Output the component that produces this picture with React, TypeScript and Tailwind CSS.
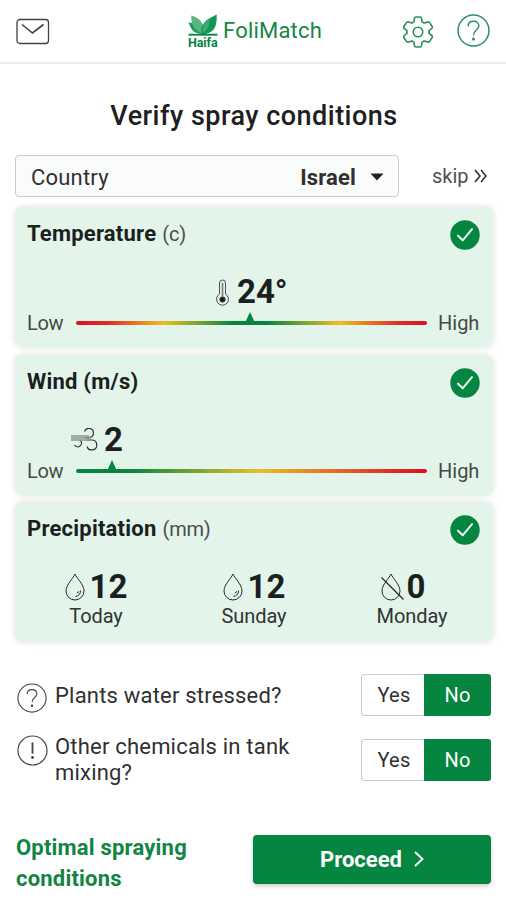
import type { ReactNode } from "react";

function CheckBadge() {
  return (
    <svg className="h-[30px] w-[30px] shrink-0" viewBox="0 0 30 30" fill="none">
      <circle cx="15" cy="15" r="14.7" fill="#048540" />
      <path d="M8 15.7 12.7 20.3 22 9.2" stroke="#e6f5ec" strokeWidth="2.1" strokeLinecap="round" strokeLinejoin="round" />
    </svg>
  );
}

function Card({ title, unit, children }: { title: string; unit?: string; children: ReactNode }) {
  return (
    <section className="h-[140px] rounded-[8px] bg-[#e3f4ea] pl-[12px] pr-[13px] pt-[13px] shadow-[0_0_6px_rgba(0,0,0,0.14)]">
      <div className="flex h-[30px] justify-between">
        <h2 className="text-[22px] font-bold leading-[28px] tracking-[0.22px] text-[#1b1f1d]">
          {title}
          {unit && <span className="ml-1.5 text-[20px] font-normal tracking-[-0.2px] text-[#4a4f4c]">{unit}</span>}
        </h2>
        <CheckBadge />
      </div>
      {children}
    </section>
  );
}

function Scale({ track, marker }: { track: string; marker: string }) {
  return (
    <div className="flex h-6 items-center text-[20px] leading-6 text-[#454a47]">
      <span className="w-[49px] tracking-[-0.3px]">Low</span>
      <div className={"relative h-1 w-[351px] rounded-full " + track}>
        <svg className={"absolute -top-[9px] h-[11px] w-[10px] " + marker} viewBox="0 0 10 11">
          <path d="M5 0 10 11H0Z" fill="#048540" />
        </svg>
      </div>
      <span className="ml-[11px]">High</span>
    </div>
  );
}

function Drop({ crossed }: { crossed?: boolean }) {
  return (
    <svg className={crossed ? "h-7 w-6" : "h-7 w-5"} viewBox={crossed ? "0 0 24 28" : "0 0 20 28"} fill="none" stroke="#252b28" strokeWidth="1">
      <path d="M10 1C8.500 5 1 11.500 1 18a9 9 0 0 0 18 0C19 11.500 11.500 5 10 1Z" />
      {crossed ? <path d="m.5 4.500 22 22" strokeWidth="1.2" /> : <path d="M15.500 17.500a6 6 0 0 1-5 6M12 20l2-1.500" />}
    </svg>
  );
}

function Day({ value, label, crossed, className }: { value: string; label: string; crossed?: boolean; className: string }) {
  return (
    <div className={"flex flex-col items-center " + className}>
      <div className={"flex h-[34px] items-center text-[33px] font-bold leading-[34px] text-[#1b1f1d] " + (crossed ? "gap-[2px] pr-[18px]" : "gap-[5px]")}>
        <Drop crossed={crossed} />
        <span>{value}</span>
      </div>
      <div className="text-[20px] leading-6 tracking-[-0.1px] text-[#303532]">{label}</div>
    </div>
  );
}

function Toggle() {
  return (
    <div className="flex h-[42px] w-[130px] overflow-hidden rounded-[3px] text-[20px] leading-[42px] tracking-[0.2px]">
      <button className="w-[63px] rounded-l-[3px] border border-r-0 border-[#c8cbc9] pl-[2px] leading-[41px] text-[#303030]">Yes</button>
      <button className="w-[67px] bg-[#048540] text-white">No</button>
    </div>
  );
}

function CircleMark({ kind, className, width }: { kind: "question" | "alert"; className: string; width: string }) {
  return (
    <svg className={className} viewBox="0 0 32 32" fill="none" stroke="currentColor" strokeWidth={width} strokeLinecap="round">
      <circle cx="16" cy="16" r="15" />
      {kind === "question" ? (
        <>
          <path d="M10.800 11.500C11 8.500 13 7 16 7s5.200 1.800 5.200 4.500c0 4-5 4-5 8.500" />
          <circle cx="16" cy="24.300" r=".8" fill="currentColor" />
        </>
      ) : (
        <>
          <path d="M16 8.500v10" strokeWidth="1.900" />
          <circle cx="16" cy="23.300" r=".9" fill="currentColor" />
        </>
      )}
    </svg>
  );
}

export default function App() {
  return (
    <main className="flex h-[900px] w-[506px] flex-col overflow-hidden whitespace-nowrap bg-white font-[Roboto,sans-serif]">
      <header className="flex h-[64px] shrink-0 items-start border-b-2 border-[#ececec]">
        <svg className="ml-4 mt-[18px] h-[27px] w-[34px]" viewBox="0 0 34 27" fill="none" stroke="#414141" strokeWidth="1.300">
          <rect x="1" y="1.500" width="31.500" height="24" rx="3" />
          <path d="m6 6.500 10.500 8.500L27.500 6.500" strokeWidth="1.600" />
        </svg>
        <div className="ml-[138px] mt-[14px] w-[30px]">
          <svg className="block h-[22px] w-[30px]" viewBox="0 0 30 22">
            <path d="M15 20C5 20 3 15 .5 8.500c4 .2 6.500 1.500 8.500 4Z" fill="#1f9a57" />
            <path d="M15 20C6 16.500 3 10 3.200 1.500 11 3.500 16.500 9 16 18Z" fill="#5bb583" />
            <path d="M13.500 20C12 8.500 20 5 28.700.5 29 12 27 20 13.500 20Z" fill="#139653" />
            <path d="M14.500 19.500C13.500 12 17 8 21 5.500c1.500 5-1.500 10.500-6.500 14Z" fill="#3eaa70" />
            <path d="M.5 20.700h29" stroke="#048540" strokeWidth="1.900" />
          </svg>
          <div className="text-[12.5px] font-bold leading-[13px] tracking-[-0.1px] text-[#048540]">Haifa</div>
        </div>
        <span className="ml-[5px] mt-[17px] text-[22px] leading-7 tracking-[0.2px] text-[#168647]">FoliMatch</span>
        <svg className="ml-auto mt-[16px] h-8 w-8 text-[#278f60]" viewBox="0 0 32 32" fill="none" stroke="currentColor" strokeWidth="1.600" strokeLinejoin="round">
          <path d="M12.500 2.300Q12.700 1 14 1h4q1.300 0 1.500 1.300l.6 3.600 2 1.200 3.500-1.200q1.200-.4 1.900.7l2.700 3.900q.6 1.200-.4 2L27 14.700v2.600l2.800 2.200q1 .8.400 2l-2.700 3.900q-.7 1.100-1.900.7l-3.500-1.200-2 1.200-.6 3.600Q19.300 31 18 31h-4q-1.300 0-1.500-1.300l-.6-3.600-2-1.200-3.500 1.200q-1.200.4-1.900-.7l-2.700-3.900q-.6-1.200.4-2L5 17.300v-2.600l-2.800-2.200q-1-.8-.4-2l2.700-3.900q.7-1.100 1.900-.7l3.500 1.200 2-1.200Z" />
          <circle cx="16" cy="16" r="4.700" />
        </svg>
        <CircleMark kind="question" width="1.400" className="ml-[23px] mr-[16px] mt-[14px] h-[33px] w-[33px] text-[#278f60]" />
      </header>

      <h1 className="mt-[34px] text-center text-[27px] font-medium leading-9 tracking-[0.48px] text-[#202020]"><span className="ml-[2px]">Verify spray conditions</span></h1>

      <div className="mt-[21px] flex h-[42px] shrink-0 items-center px-[15px]">
        <button className="flex h-[42px] w-[384px] items-center rounded-[4px] border border-[#c8cecb] bg-[#fafcfb] pl-[15px] pr-[14px] text-[22px] text-[#303030]">
          <span className="pt-[2px] tracking-[0.2px]">Country</span>
          <span className="ml-auto pt-[2px] font-bold tracking-[0.15px]">Israel</span>
          <svg className="ml-[14px] mt-[2px] h-[8px] w-[14px]" viewBox="0 0 14 8"><path d="M.5.500h13L7 7.500Z" fill="#202020" /></svg>
        </button>
        <button className="ml-[33px] flex items-center text-[20px] leading-6 text-[#505050]">
          <span>skip</span>
          <svg className="ml-[5px] h-[14px] w-[13px]" viewBox="0 0 13 14" fill="none" stroke="#303030" strokeWidth="1.600"><path d="m1 1 5 6-5 6M7 1l5 6-5 6" /></svg>
        </button>
      </div>

      <div className="mt-[10px] flex flex-col gap-[7.5px] pl-[15px] pr-[13px]">
        <Card title="Temperature" unit="(c)">
          <div className="ml-[189px] mt-[25px] flex h-[34px] items-center text-[33px] font-bold leading-[34px] text-[#1b1f1d]">
            <svg className="mr-[8px] h-[27px] w-[13px]" viewBox="0 0 13 27" fill="none" stroke="#3a403d" strokeWidth=".9">
              <path d="M3.500 15V4a3 3 0 0 1 6 0v11a6 6 0 1 1-6 0Z" />
              <path d="M6.500 4v13" strokeWidth="1.600" stroke="#777e7a" />
              <circle cx="6.500" cy="20.500" r="2.700" fill="#1b1f1d" />
            </svg>
            <span>24°</span>
          </div>
          <div className="mt-[2px]">
            <Scale track="bg-[linear-gradient(90deg,#dc1021_0%,#df2d24_9%,#eabf25_25%,#048540_45%,#048540_54%,#eabf25_75%,#df2d24_92%,#dc1021_100%)]" marker="left-[169px]" />
          </div>
        </Card>
        <Card title="Wind (m/s)">
          <div className="ml-[44px] mt-[25px] flex h-[34px] items-center text-[33px] font-bold leading-[34px] text-[#1b1f1d]">
            <svg className="mr-[6px] h-[24px] w-[27px]" viewBox="0 0 27 24" fill="none" stroke="#303733" strokeWidth="1.200">
              <path d="M13.500 3.500A4.600 4.600 0 1 1 18.500 9.500H14" />
              <path d="M15 12h6.500a5 5 0 1 1-5.500 6.500" />
              <path d="M9 13h1a3.800 3.800 0 1 1-6.500 4" />
              <path d="M0 8h18M0 10h20M0 12h17" stroke="#8b9690" strokeWidth="1.500" />
            </svg>
            <span>2</span>
          </div>
          <div className="mt-[2px]">
            <Scale track="bg-[linear-gradient(90deg,#048540_0%,#048540_15%,#eabf25_52%,#df2d24_90%,#dc1021_100%)]" marker="left-[31px]" />
          </div>
        </Card>
        <Card title="Precipitation" unit="(mm)">
          <div className="mt-[25px] flex">
            <Day value="12" label="Today" className="ml-[37px] w-[64px]" />
            <Day value="12" label="Sunday" className="ml-[89px] w-[74px]" />
            <Day value="0" label="Monday" crossed className="ml-[79px] w-[84px]" />
          </div>
        </Card>
      </div>

      <div className="mt-[32px] flex h-[42px] shrink-0 items-start pl-[17px] pr-[15px]">
        <CircleMark kind="question" width="1.200" className="mt-[9px] h-[30px] w-[30px] text-[#484848]" />
        <span className="ml-[8px] mt-[9px] text-[22px] leading-[26px] tracking-[0.2px] text-[#303030]">Plants water stressed?</span>
        <div className="ml-auto"><Toggle /></div>
      </div>
      <div className="mt-[18px] flex h-[52px] shrink-0 items-start pl-[17px] pr-[15px]">
        <CircleMark kind="alert" width="1.200" className="mt-px h-[31px] w-[31px] text-[#484848]" />
        <span className="ml-[7px] text-[22px] leading-[26px] tracking-[0.2px] text-[#303030]">Other chemicals in tank<br />mixing?</span>
        <div className="ml-auto mt-[5px]"><Toggle /></div>
      </div>

      <footer className="mt-[45.5px] flex shrink-0 items-start justify-between pl-4 pr-[15px]">
        <a className="text-[22px] font-bold leading-[31px] tracking-[0.2px] text-[#128444]">Optimal spraying<br />conditions</a>
        <button className="mt-[3px] flex h-[49px] w-[238px] items-center justify-center rounded-[4px] bg-[#048540] text-[22px] font-bold text-white shadow-[0_2px_4px_rgba(0,0,0,0.2)]">
          <span>Proceed</span>
          <svg className="ml-[12px] h-4 w-[10px]" viewBox="0 0 10 16" fill="none" stroke="white" strokeWidth="1.900"><path d="m1 1 7.500 7L1 15" /></svg>
        </button>
      </footer>
    </main>
  );
}
